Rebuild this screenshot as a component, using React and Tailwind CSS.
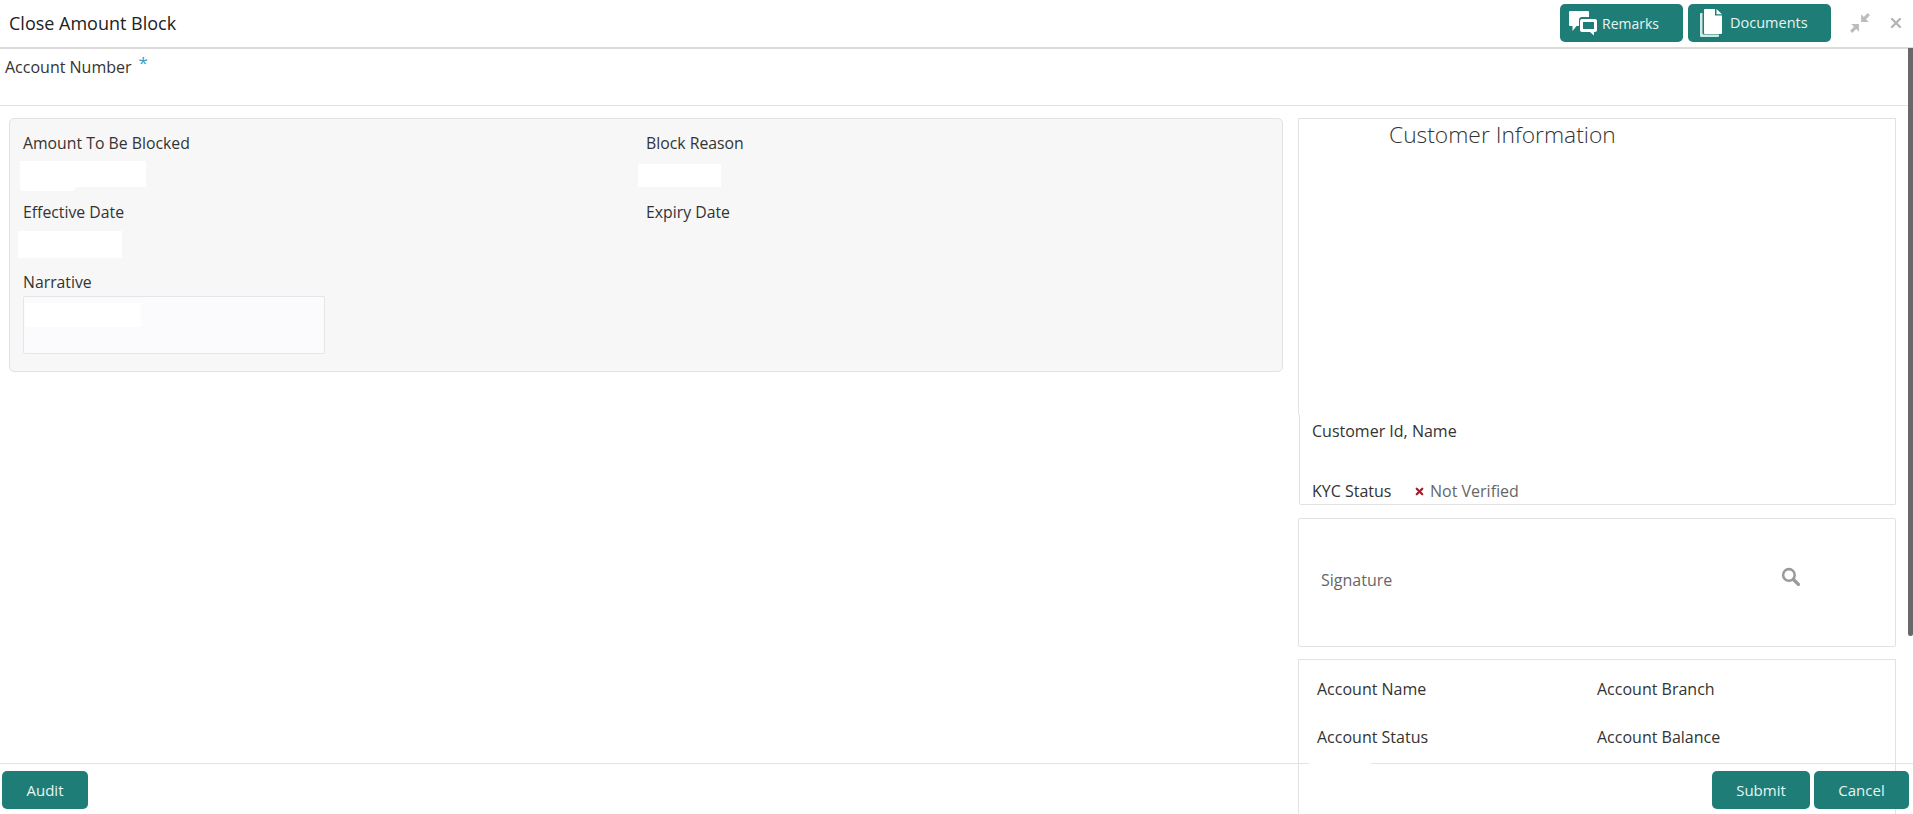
import React from 'react';
import { X } from 'lucide-react';

const TealButton = ({ className = '', children }) => (
  <button className={`h-[38px] flex items-center rounded-[5px] bg-[#1f7d77] text-[#e6f5f2] ${className}`}>
    {children}
  </button>
);

const RemarksIcon = () => (
  <svg width="29" height="25" viewBox="0 0 29 25" fill="none">
    <path d="M1 0h18a1 1 0 0 1 1 1v5h-7a3 3 0 0 0-3 3v6H7.5L3.5 20V15H1a1 1 0 0 1-1-1V1a1 1 0 0 1 1-1z" fill="#fff" />
    <path d="M13 8h13a2 2 0 0 1 2 2v9a2 2 0 0 1-2 2h-1v3.500L21 21h-8a2 2 0 0 1-2-2v-9a2 2 0 0 1 2-2z" fill="#fff" />
    <rect x="14" y="11" width="11" height="7" fill="#1f7d77" />
  </svg>
);

const DocumentsIcon = () => (
  <svg width="22" height="28" viewBox="0 0 22 28">
    <path d="M2.500 4v20a1.500 1.500 0 0 0 1.500 1.500h15V27a1 1 0 0 1-1 1H1a1 1 0 0 1-1-1V5a1 1 0 0 1 1-1z" fill="#cfe9e6" />
    <path d="M5 0h10v6.500h7V24a1 1 0 0 1-1 1H5a1 1 0 0 1-1-1V1a1 1 0 0 1 1-1z" fill="#fff" />
    <path d="M16.500 0L22 5.200h-5.500z" fill="#fff" />
  </svg>
);

const CollapseIcon = () => (
  <svg width="22" height="22" viewBox="0 0 20 20" fill="#bcbcbc">
    <path d="M11 9V2l2.500 2.500L17 1l2 2-3.500 3.500L18 9z" />
    <path d="M9 11v7l-2.500-2.500L3 19l-2-2 3.500-3.500L2 11z" />
  </svg>
);

const SearchIcon = () => (
  <svg width="19" height="19" viewBox="0 0 18 18" fill="none" stroke="#9a9a9a">
    <circle cx="7.500" cy="7.500" r="5.500" strokeWidth="2.400" />
    <path d="M11.800 11.800L16.500 16.500" strokeWidth="3.200" strokeLinecap="round" />
  </svg>
);

const Label = ({ children }) => <div className="h-6 leading-6 text-[15.800px] text-[#333]">{children}</div>;

export default function App() {
  return (
    <div className="relative h-[814px] overflow-hidden bg-white font-['Open_Sans','Noto_Sans',sans-serif] text-[#333]">
      {/* Header */}
      <div className="h-[49px] flex items-center justify-between border-b-2 border-[#dcdcdc] pb-[1px]">
        <h1 className="pl-[9px] text-[18px] text-[#222]">Close Amount Block</h1>
        <div className="flex items-center">
          <TealButton className="w-[123px] pl-[9px] gap-[4px] text-[14px]">
            <RemarksIcon />
            Remarks
          </TealButton>
          <TealButton className="w-[143px] ml-[5px] pl-[12px] gap-[8px] text-[14.5px]">
            <DocumentsIcon />
            Documents
          </TealButton>
          <div className="ml-[18px]">
            <CollapseIcon />
          </div>
          <X className="ml-[17px] mr-[9px] text-[#b5b5b5]" size={16} strokeWidth={3.500} />
        </div>
      </div>

      {/* Account number */}
      <div className="h-[57px] mr-[5px] border-b border-[#e2e2e2] pl-[5px] pt-[5px]">
        <span className="text-[16px] text-[#333]">Account Number</span>
        <span className="relative -top-[4px] ml-[7px] text-[#3a9cc0] text-[17px]">*</span>
      </div>

      <div className="flex pt-[12px] pl-[9px]">
        {/* Block details */}
        <div className="w-[1274px] h-[254px] shrink-0 rounded-[5px] border border-[#e2e2e2] bg-[#f7f7f8] pl-[13px] pt-[12px]">
          <div className="flex h-[69px]">
            <div className="w-[623px]">
              <Label>Amount To Be Blocked</Label>
              <div className="-ml-[3px] mt-[6px] w-[126px] h-[26px] bg-white">
                <div className="w-[55px] h-[30px] bg-white rounded-[3px]" />
              </div>
            </div>
            <div>
              <Label>Block Reason</Label>
              <div className="-ml-[8px] mt-[9px] w-[83px] h-[23px] bg-white" />
            </div>
          </div>
          <div className="flex h-[70px]">
            <div className="w-[623px]">
              <Label>Effective Date</Label>
              <div className="-ml-[5px] mt-[7px] w-[104px] h-[27px] bg-white" />
            </div>
            <Label>Expiry Date</Label>
          </div>
          <Label>Narrative</Label>
          <div className="mt-[2px] w-[302px] h-[58px] rounded-[2px] border border-[#e6e6e8] bg-[#fbfbfd] pl-[1px] pt-[6px]">
            <div className="w-[116px] h-[24px] bg-white" />
          </div>
        </div>

        {/* Customer side panels */}
        <div className="ml-[15px] w-[598px] shrink-0">
          <div className="h-[297px] border-l border-r border-t border-[#e2e2e2]">
            <h2 className="pl-[90px] text-[22.800px] font-light leading-[32px] text-[#333]">Customer Information</h2>
          </div>
          <div className="h-[90px] ml-[1px] border-l border-r border-b border-[#e2e2e2] rounded-b-[2px] pl-[12px]">
            <div className="pt-[4px] h-[64px] text-[16px] leading-6">Customer Id, Name</div>
            <div className="flex items-center text-[16px] leading-6">
              <span className="w-[100px]">KYC Status</span>
              <X className="ml-[2px] mr-[5px] text-[#a5202f]" size={11} strokeWidth={5} />
              <span className="text-[#666]">Not Verified</span>
            </div>
          </div>
          <div className="mt-[13px] h-[129px] border border-[#e2e2e2] rounded-[2px] flex items-center justify-between pl-[22px] pr-[95px]">
            <span className="text-[16px] leading-6 mb-[5px] text-[#666]">Signature</span>
            <div className="mb-[12px]">
              <SearchIcon />
            </div>
          </div>
          <div className="mt-[12px] h-[300px] border border-[#e2e2e2] pl-[18px] pt-[17px] text-[16px]">
            <div className="flex h-[48px] leading-6">
              <span className="w-[280px]">Account Name</span>
              <span>Account Branch</span>
            </div>
            <div className="flex leading-6">
              <span className="w-[280px]">Account Status</span>
              <span>Account Balance</span>
            </div>
          </div>
        </div>
      </div>

      {/* Scrollbar thumb */}
      <div className="absolute right-0 top-[48px] w-[5px] h-[588px] rounded-b-[3px] bg-[#6b6668]" />

      {/* Footer sits over the scrolled content */}
      <div className="absolute inset-x-0 bottom-0 h-[51px] border-t border-[#e2e2e2] flex justify-between pl-[2px] pr-[4px] pt-[7px] text-[15px]">
        <TealButton className="w-[86px] justify-center">Audit</TealButton>
        <div className="flex gap-[4px]">
          <TealButton className="w-[98px] justify-center">Submit</TealButton>
          <TealButton className="w-[95px] justify-center">Cancel</TealButton>
        </div>
        <div className="absolute left-[1309px] -top-[1px] w-[62px] h-[12px] bg-white" />
      </div>
    </div>
  );
}
